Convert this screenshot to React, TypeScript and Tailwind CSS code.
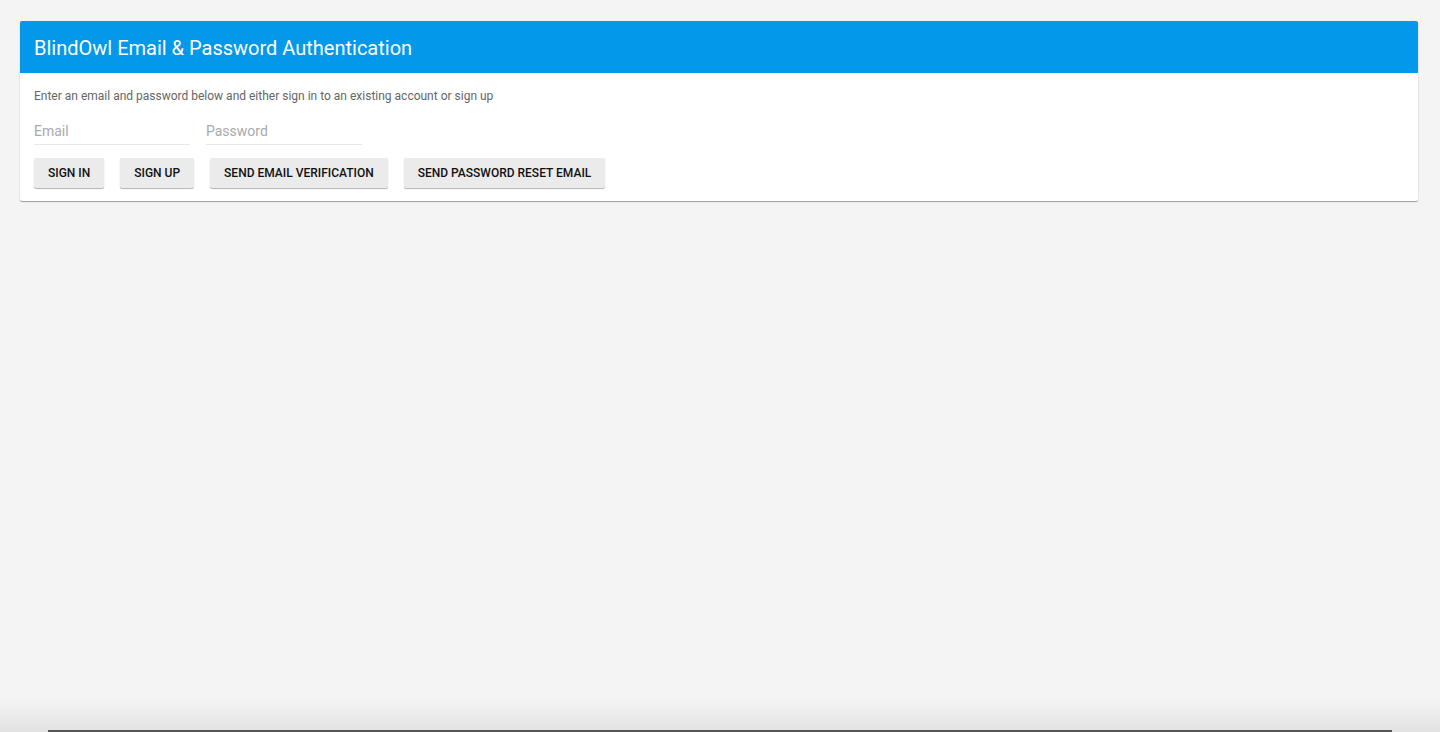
import React, { useState } from 'react'

const buttons = ['Sign in', 'Sign up', 'Send email verification', 'Send password reset email']

export default function App() {
  const [email, setEmail] = useState('')
  const [password, setPassword] = useState('')

  return (
    <div
      className="relative min-h-screen bg-[#f4f4f4] pt-[21px] px-[20px] pr-[22px]"
      style={{ fontFamily: 'Roboto, "Liberation Sans", sans-serif' }}
    >
      {/* Auth card */}
      <div className="bg-white rounded-[2px] shadow-[0_1px_1px_rgba(0,0,0,0.35),0_0_2px_rgba(0,0,0,0.08)] overflow-hidden">
        <div className="h-[52px] bg-[#0398ea] flex items-center px-[14px]">
          <h2 className="text-white text-[20px] font-normal leading-none pt-[1px]">
            BlindOwl Email &amp; Password Authentication
          </h2>
        </div>

        <div className="px-[14px] pt-[16px] pb-[13px]">
          <p className="text-[12px] text-[#666] leading-[14px]">
            Enter an email and password below and either sign in to an existing account or sign up
          </p>

          <div className="flex gap-[16px] mt-[16px]">
            <input
              type="email"
              value={email}
              onChange={(e) => setEmail(e.target.value)}
              placeholder="Email"
              className="w-[156px] h-[26px] text-[14px] text-[#333] placeholder-[#aaa] border-b border-[#e8e8e8] outline-none bg-transparent pb-[1px]"
            />
            <input
              type="password"
              value={password}
              onChange={(e) => setPassword(e.target.value)}
              placeholder="Password"
              className="w-[156px] h-[26px] text-[14px] text-[#333] placeholder-[#aaa] border-b border-[#e8e8e8] outline-none bg-transparent pb-[1px]"
            />
          </div>

          <div className="flex gap-[16px] mt-[13px]">
            {buttons.map((label) => (
              <button
                key={label}
                className="h-[30px] px-[14px] bg-[#ebebeb] rounded-[2px] text-[12px] font-medium uppercase text-[#111] shadow-[0_1px_1px_rgba(0,0,0,0.3)] hover:bg-[#e0e0e0]"
              >
                {label}
              </button>
            ))}
          </div>
        </div>
      </div>

      {/* window bottom shading */}
      <div className="absolute left-0 right-0 bottom-0 h-[34px] bg-gradient-to-b from-transparent to-[#e2e2e2] pointer-events-none" />
      <div className="absolute left-[48px] right-[48px] bottom-0 h-[2px] bg-[#555] pointer-events-none" />
    </div>
  )
}
